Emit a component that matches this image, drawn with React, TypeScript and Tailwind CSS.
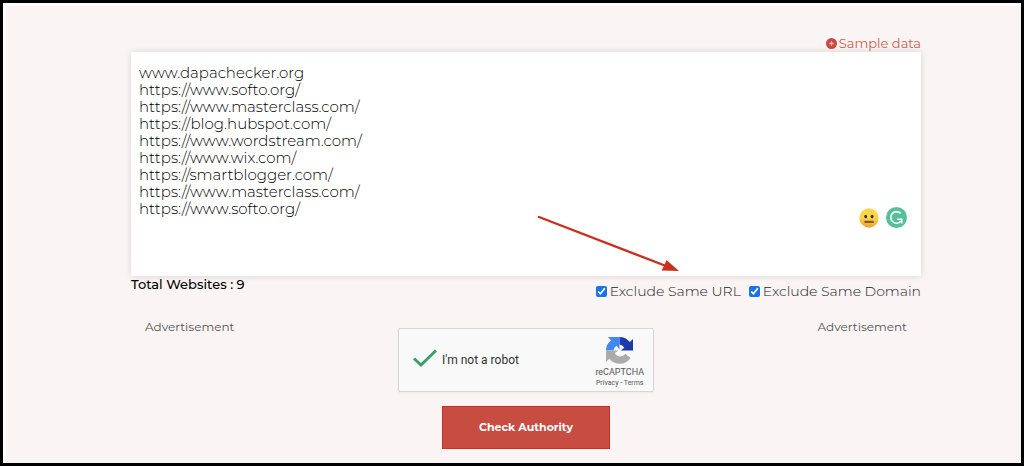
import { useState } from "react";

const sampleSites = [
  "www.dapachecker.org",
  "https://www.softo.org/",
  "https://www.masterclass.com/",
  "https://blog.hubspot.com/",
  "https://www.wordstream.com/",
  "https://www.wix.com/",
  "https://smartblogger.com/",
  "https://www.masterclass.com/",
  "https://www.softo.org/",
];

const PlusCircle = () => (
  <svg viewBox="0 0 10 10" className="size-[11px]" aria-hidden="true">
    <circle cx="5" cy="5" r="5" fill="#c94a3f" />
    <path d="M5 3v4M3 5h4" stroke="#eeb5ad" strokeWidth="1.2" />
  </svg>
);

const NeutralFace = () => (
  <svg viewBox="0 0 20 20" className="size-5" aria-hidden="true">
    <defs>
      <linearGradient id="face" x1="0" y1="0" x2="0" y2="1">
        <stop offset="0.45" stopColor="#fbd64b" />
        <stop offset="1" stopColor="#e9a23a" />
      </linearGradient>
    </defs>
    <circle cx="10" cy="10" r="9.7" fill="url(#face)" />
    <ellipse cx="6.7" cy="8.6" rx="1.4" ry="1.8" fill="#3b2a1c" />
    <ellipse cx="13.1" cy="8.6" rx="1.4" ry="1.8" fill="#3b2a1c" />
    <rect x="5.2" y="12.8" width="9.6" height="2.2" rx="1" fill="#8d5a25" />
  </svg>
);

const GrammarBadge = () => (
  <svg viewBox="0 0 20 20" className="size-[21px]" aria-hidden="true">
    <circle cx="10" cy="10" r="10" fill="#55bf9b" />
    <path
      d="M14 6.1A5.500 5.500 0 1 0 14.300 13.400M10.600 11.700h4.400v4"
      fill="none"
      stroke="#fff"
      strokeWidth="1.5"
    />
  </svg>
);

const Arrow = () => (
  <svg
    viewBox="0 0 142 58"
    className="pointer-events-none absolute bottom-1 left-[406px] h-[58px] w-[142px]"
    aria-hidden="true"
  >
    <path d="M2 3L129 52" stroke="#c9301d" strokeWidth="2.4" strokeLinecap="round" />
    <path d="M129.500 46L142 57L124.500 56.500L127 52Z" fill="#c9301d" />
  </svg>
);

const RecaptchaLogo = () => (
  <svg viewBox="0 0 64 64" className="size-[27px]" aria-hidden="true">
    <path
      d="M64 31.900V4.600L56.500 12.100A32 32 0 0 0 31.900 0v17.500A15 15 0 0 1 43.400 25.200L34.600 32Z"
      fill="#1c3aa9"
    />
    <path
      d="M31.900 0H4.600L12.100 7.500A32 32 0 0 0 0 32h17.500A15 15 0 0 1 25.200 20.600L31.900 29.400Z"
      fill="#4285f4"
    />
    <path
      d="M0 32v27.300L7.500 51.800A32 32 0 0 0 58.500 50L45.800 39.500A15 15 0 0 1 20.600 38.700L29.400 32Z"
      fill="#ababab"
    />
  </svg>
);

const Option = ({ id, label }: { id: string; label: string }) => (
  <div className="flex items-center gap-[3px]">
    <input id={id} type="checkbox" defaultChecked className="size-[11px] accent-[#1a73e8]" />
    <label htmlFor={id} className="text-sm leading-[17px] font-light text-[#222]">
      {label}
    </label>
  </div>
);

const App: React.FC = () => {
  const [text, setText] = useState(sampleSites.join("\n"));
  const total = text.split("\n").filter((line) => line.trim()).length;

  return (
    <div className="min-h-screen border-[3px] border-black bg-[#fbf4f4] font-['Montserrat','Inter',sans-serif] text-[13px] leading-[17px]">
      <main className="border-t-[3px] border-l-[3px] border-white pt-[29px] pr-[100px] pb-3 pl-[125px]">
        <div className="flex justify-end">
          <button
            type="button"
            onClick={() => setText(sampleSites.join("\n"))}
            className="flex items-center gap-[2px] text-[#c9604f]"
          >
            <PlusCircle />
            Sample data
          </button>
        </div>

        <div className="relative">
          <textarea
            aria-label="Websites"
            value={text}
            onChange={(e) => setText(e.target.value)}
            spellCheck={false}
            className="block h-56 w-full resize-none bg-white px-2 py-3 text-[15px] leading-[17px] font-light text-black shadow-[0_0_6px_rgba(0,0,0,0.15)] outline-none"
          />
          <div className="absolute right-[14px] bottom-12 flex items-center gap-[7px]">
            <NeutralFace />
            <GrammarBadge />
          </div>
          <Arrow />
        </div>

        <div className="flex items-start justify-between">
          <p className="font-medium text-black">Total Websites : {total}</p>
          <div className="flex gap-2 pt-[7px]">
            <Option id="same-url" label="Exclude Same URL" />
            <Option id="same-domain" label="Exclude Same Domain" />
          </div>
        </div>

        <div className="mt-[19px] flex items-start justify-between px-[14px] text-xs text-[#555]">
          <p>Advertisement</p>
          <div className="mt-[9px] flex h-16 w-64 items-center justify-between rounded-xs border border-[#d6d6d6] bg-[#f9f9f9] pr-[9px] pl-[14px] font-['Roboto',sans-serif] shadow-xs">
            <div className="flex items-center gap-[5px] text-[#333]">
              <svg viewBox="0 0 24 22" className="h-[22px] w-6" aria-hidden="true">
                <path d="M1 9.500L8 16L23 1.500" fill="none" stroke="#38a169" strokeWidth="3" />
              </svg>
              <span>I'm not a robot</span>
            </div>
            <div className="flex flex-col items-center pt-1 text-[#555]">
              <RecaptchaLogo />
              <span className="mt-[3px] text-[9px] leading-[11px]">reCAPTCHA</span>
              <span className="text-[7px] leading-[10px]">
                <a href="#privacy">Privacy</a> - <a href="#terms">Terms</a>
              </span>
            </div>
          </div>
          <p>Advertisement</p>
        </div>

        <div className="mt-[14px] flex justify-center">
          <button
            type="button"
            className="border border-[#cf2e20] bg-[#c74c41] px-9 py-3 text-[11px] leading-[17px] font-bold text-white"
          >
            Check Authority
          </button>
        </div>
      </main>
    </div>
  );
};

export default App;
